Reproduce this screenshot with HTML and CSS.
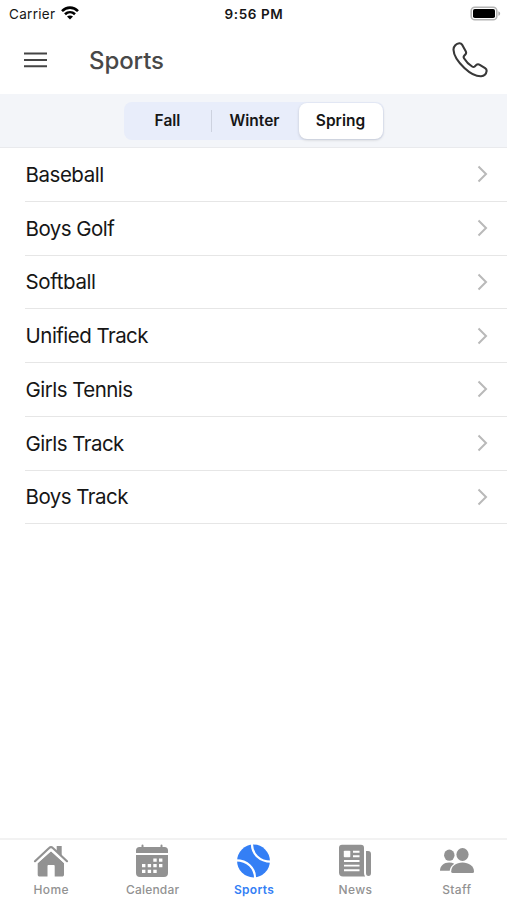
FILE: index.html
```html
<!DOCTYPE html>
<html lang="en">
<head>
<meta charset="utf-8">
<title>Sports</title>
<link rel="stylesheet" href="styles.css">
</head>
<body>
<div class="status">
  <div class="carrier"><span>Carrier</span>
    <svg width="18" height="14" viewBox="0 0 18 14"><g fill="none" stroke="#000" stroke-width="2.6"><path d="M1 5.1C5.6.5 12.4.5 17 5.1"/><path d="M4 8.3c2.9-2.8 7.1-2.8 10 0"/></g><path d="M9 13.5 6 10.6c1.700-1.500 4.300-1.500 6 0z"/></svg>
  </div>
  <div class="time">9:56 PM</div>
  <svg class="battery" width="31" height="15" viewBox="0 0 31 15"><rect x="1.200" y="1.200" width="25.600" height="12.600" rx="3.600" fill="#fff" stroke="#b4b4b4" stroke-width="1.600"/><rect x="3" y="3" width="22" height="9" rx="1.800"/><path d="M28.400 5.200c2.300.8 2.300 3.800 0 4.600z" fill="#aaa"/></svg>
</div>
<header class="header">
  <svg class="menu" width="23" height="16" viewBox="0 0 23 16"><path d="M0 1.500h23M0 8h23M0 14.200h23" stroke="#444" stroke-width="2.100"/></svg>
  <h1>Sports</h1>
  <svg class="phone" width="36" height="36" viewBox="0 0 36 36"><path d="M7.300 1.200C4.400 1.600 1.400 4.100 1.500 7.700c.2 5.600 5.600 13.200 10.900 18.200 4.900 4.600 11.600 8.500 16.700 8.300 2.900-.2 5.100-2.400 5.500-5.100.2-1.300-.5-2.200-1.500-2.900l-5.300-3.400c-1.300-.8-2.600-.7-3.600.3l-1.500 1.400c-.8.7-1.700.6-2.600 0-3.300-2.100-6.200-5.200-8.100-8.300-.6-1-.5-1.700.2-2.500l1.300-1.500c.8-.9.8-2 .1-3.200L10 2.600c-.6-1-1.500-1.500-2.700-1.400z" fill="none" stroke="#383838" stroke-width="2.100" stroke-linejoin="round"/></svg>
</header>
<div class="filter">
  <div class="segments">
    <div class="segment fall">Fall</div>
    <div class="segment winter">Winter</div>
    <div class="segment selected">Spring</div>
  </div>
</div>
<main class="list">
  <div class="row"><span class="baseball">Baseball</span><svg width="11" height="18" viewBox="0 0 11 18"><path d="m1.500 1.500 7.500 7.500-7.500 7.500"/></svg></div>
  <div class="row"><span>Boys Golf</span><svg width="11" height="18" viewBox="0 0 11 18"><path d="m1.500 1.500 7.500 7.500-7.500 7.500"/></svg></div>
  <div class="row"><span class="softball">Softball</span><svg width="11" height="18" viewBox="0 0 11 18"><path d="m1.500 1.500 7.500 7.500-7.500 7.500"/></svg></div>
  <div class="row"><span>Unified Track</span><svg width="11" height="18" viewBox="0 0 11 18"><path d="m1.500 1.500 7.500 7.500-7.500 7.500"/></svg></div>
  <div class="row"><span>Girls Tennis</span><svg width="11" height="18" viewBox="0 0 11 18"><path d="m1.500 1.500 7.500 7.500-7.500 7.500"/></svg></div>
  <div class="row"><span>Girls Track</span><svg width="11" height="18" viewBox="0 0 11 18"><path d="m1.500 1.500 7.500 7.500-7.500 7.500"/></svg></div>
  <div class="row"><span>Boys Track</span><svg width="11" height="18" viewBox="0 0 11 18"><path d="m1.500 1.500 7.500 7.500-7.500 7.500"/></svg></div>
</main>
<nav class="tabs">
  <div class="tab">
    <svg width="36" height="34" viewBox="0 0 36 34"><path fill="currentColor" d="M18 7.200 31 19v11.500c0 1.400-.7 2.100-2.100 2.100h-7.200V22.200c0-.7-.4-1.100-1.100-1.100h-5c-.7 0-1.100.4-1.100 1.100v10.400H6.800c-1.400 0-2.100-.7-2.100-2.100V19zM23.700 2h5v10.200l-5-4.600z"/><path d="M2 17.200 16.400 3.800c1-1 2.200-1 3.200 0L34 17.200" fill="none" stroke="currentColor" stroke-width="2.200" stroke-linecap="round"/><path d="M4 19 18 6.200 32 19" fill="none" stroke="#fff" stroke-width="1.200"/></svg>
    <span>Home</span>
  </div>
  <div class="tab calendar">
    <svg width="36" height="34" viewBox="0 0 36 34"><path fill="currentColor" d="M2 9V6.500Q2 3 5.500 3h2V1.500q0-1 1-1t1 1V3h17V1.500q0-1 1-1t1 1V3h2Q34 3 34 6.500V9zM2 11h32v18q0 4-4 4H6q-4 0-4-4z"/><path d="M19.300 14.500h3.400v3.200h-3.400zM25 14.500h3.400v3.200H25zM8 20h3.400v3.200H8zM13.700 20h3.400v3.200h-3.400zM19.300 20h3.400v3.200h-3.400zM25 20h3.400v3.200H25zM8 25.700h3.400v3.200H8zM13.700 25.700h3.400v3.200h-3.400zM19.300 25.700h3.400v3.200h-3.400z" fill="#fff"/></svg>
    <span>Calendar</span>
  </div>
  <div class="tab active">
    <svg width="36" height="34" viewBox="0 0 36 34"><circle cx="18.500" cy="17" r="16.400" fill="currentColor"/><path d="M16.900-.5C16.900 10 24.500 17.700 36 17.700M1 16.300C12.500 16.300 20.100 24 20.100 34.500" fill="none" stroke="#fff" stroke-width="2.200"/></svg>
    <span>Sports</span>
  </div>
  <div class="tab">
    <svg width="36" height="34" viewBox="0 0 36 34"><path d="M5 .7h19q3 0 3 3V29q0 2 1.200 3.600H6q-4 0-4-4V3.700q0-3 3-3zM29 7h2q3 0 3 3v19q0 3-2.500 3T29 29z" fill="currentColor"/><rect x="6.800" y="6.800" width="6.500" height="6.500" rx=".8" fill="#fff"/><path d="M16 7.700h6.500M16 12.300h6.500M7 17h15.500M7 21.600h15.500M7 26.200h15.500" stroke="#fff" stroke-width="1.900"/></svg>
    <span>News</span>
  </div>
  <div class="tab">
    <svg width="36" height="34" viewBox="0 0 36 34"><g fill="currentColor"><ellipse cx="11.300" cy="11.200" rx="5.200" ry="5.600"/><path d="M2 26.800C2 21.900 6 18.600 11.100 18.600c2 0 3.700.4 5.100 1.200-2.600 1.700-4.200 4.100-4.500 7z"/><ellipse cx="24.500" cy="10.500" rx="6.100" ry="6.500"/><path d="M13.200 27.500c0-5.300 5-8.900 11.300-8.900S36 22.200 36 27.500q0 1.500-1.500 1.500H14.700q-1.500 0-1.500-1.500z"/></g></svg>
    <span>Staff</span>
  </div>
</nav>
</body>
</html>
```
FILE: styles.css
```css
* { box-sizing: border-box; }
body {
  margin: 0;
  height: 900px;
  display: flex;
  flex-direction: column;
  overflow: hidden;
  background: #fff;
  color: #161616;
  font-family: Inter, "Liberation Sans", sans-serif;
}
svg { display: block; flex: none; }
.status {
  height: 27px;
  display: grid;
  grid-template-columns: 1fr auto 1fr;
  align-items: center;
  padding: 0 6px 0 9px;
  font-size: 13.5px;
}
.carrier { display: flex; align-items: center; gap: 6px; letter-spacing: .3px; }
.carrier svg { margin-top: -2px; }
.time { font-weight: 600; font-size: 13.5px; letter-spacing: .6px; margin-right: 2px; }
.battery { justify-self: end; margin-top: -1px; }
.header {
  height: 67px;
  display: flex;
  align-items: center;
  padding: 0 19px 0 24px;
}
.menu { margin: -1px 42px 0 0; }
.phone { margin-top: -1px; }
h1 {
  flex: 1;
  margin: 0;
  color: #484848;
  font-size: 24px;
  font-weight: 500;
  line-height: 30px;
  letter-spacing: -.1px;
}
.filter {
  height: 54px;
  display: flex;
  justify-content: center;
  align-items: center;
  background: #f3f5f9;
  border-bottom: 1px solid #e9eaed;
}
.segments {
  width: 260px;
  height: 38px;
  display: grid;
  grid-template-columns: 86px 88px 84px;
  padding: 1px;
  border-radius: 8px;
  background: #e8edfa;
}
.segment {
  display: flex;
  align-items: center;
  justify-content: center;
  font-size: 15.5px;
  font-weight: 600;
}
.winter { background: linear-gradient(#cdd2df, #cdd2df) 0 50% / 1px 22px no-repeat; }
.selected {
  background: #fff;
  border-radius: 8px;
  box-shadow: 0 1px 3px #0000002b;
}
.row {
  height: 53.75px;
  display: flex;
  align-items: center;
  justify-content: space-between;
  margin-left: 25px;
  padding-right: 19px;
  border-bottom: 1px solid #e6e6e6;
  font-size: 20.5px;
  letter-spacing: -.54px;
}
.row span { margin-left: .6px; }
.row .baseball { letter-spacing: -.48px; }
.row .softball { letter-spacing: -.4px; }
.row path { fill: none; stroke: #b9b9b9; stroke-width: 2; }
.tabs {
  height: 62px;
  margin-top: auto;
  display: grid;
  grid-template-columns: repeat(5, 1fr);
  border-top: 2px solid #f2f2f2;
}
.tab {
  display: flex;
  flex-direction: column;
  align-items: center;
  padding-top: 4px;
  color: #929292;
  font-size: 12px;
  font-weight: 500;
  letter-spacing: .4px;
}
.tab span { line-height: 16px; margin: 4px 0 0 1px; }
.calendar { letter-spacing: .2px; }
.active { color: #347ff5; letter-spacing: .3px; font-weight: 600; }
```
